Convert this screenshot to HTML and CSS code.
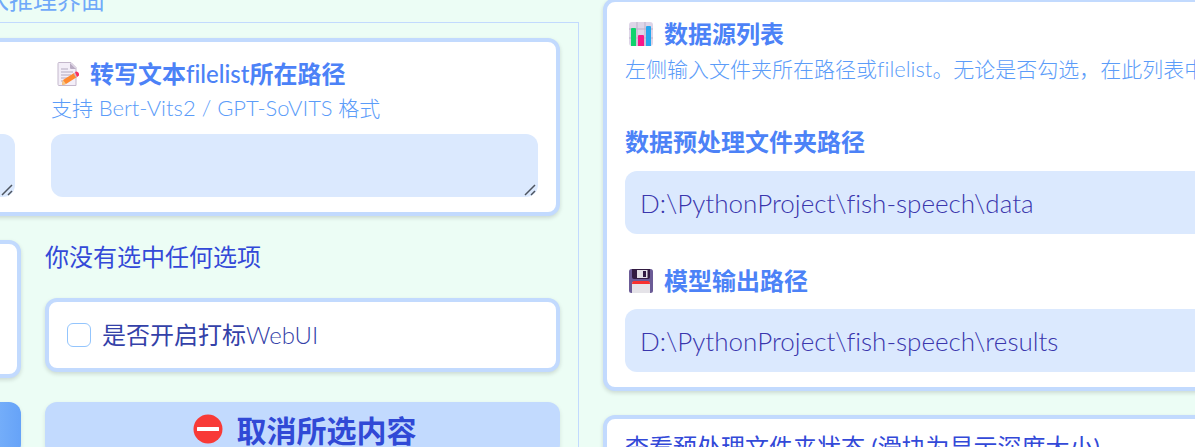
FILE: index.html
```html
<!DOCTYPE html>
<html lang="zh-CN">
<head>
<meta charset="utf-8">
<title>Fish Speech</title>
<link rel="stylesheet" href="styles.css">
</head>
<body>
<main class="page">
  <section class="left">
    <nav class="tabs"><button class="tab" type="button">入推理界面</button></nav>
    <div class="panel">
      <div class="card sources">
        <div class="field previous">
          <div class="area">
            <textarea class="box" aria-label="路径"></textarea>
            <svg class="grip" viewBox="0 0 12 12" aria-hidden="true"><path d="M1 11L11 1M7 11l4-4"/></svg>
          </div>
        </div>
        <div class="field grow">
          <label class="title" for="filelist">
            <svg class="emoji" viewBox="-2 0 24 24" aria-hidden="true">
              <path d="M2 .5h12l5 5v18H2a1 1 0 0 1-1-1v-21a1 1 0 0 1 1-1z" fill="#f3eef8" stroke="#c4b8cc"/>
              <path d="M13 1l6 6h-5a1 1 0 0 1-1-1z" fill="#b9abc3"/>
              <path d="M4 7h7M4 10h12M4 13h10M4 16h7M4 19h3" stroke="#b4a9bf" stroke-width="1.2"/>
              <path d="M5 23l1-5L17 11l3 4-11 7z" fill="#ff8a30"/>
              <path d="M5 23l1-5 3 4z" fill="#f5c889"/>
              <path d="M16.500 11.500l2-1.500 2.500 4-2 1.500z" fill="#d0b9c4"/>
              <path d="M18 10c2-2 5 1.500 4 3.500l-2 1.500z" fill="#f8315f"/>
            </svg>
            <span>转写文本<span class="latin">filelist</span>所在路径</span>
          </label>
          <p class="info">支持 <span class="info-latin">Bert-Vits2 / GPT-SoVITS</span> 格式</p>
          <div class="area">
            <textarea class="box" id="filelist"></textarea>
            <svg class="grip" viewBox="0 0 12 12" aria-hidden="true"><path d="M1 11L11 1M7 11l4-4"/></svg>
          </div>
        </div>
      </div>
      <div class="options">
        <div class="card stub"></div>
        <div class="choice">
          <p class="status">你没有选中任何选项</p>
          <div class="card check-card">
            <label class="check-label"><input class="check" type="checkbox"><span>是否开启打标<span class="light">WebUI</span></span></label>
          </div>
        </div>
        <button class="action primary" type="button" aria-label="确认"></button>
        <button class="action secondary" type="button">
          <svg class="stop" viewBox="0 0 30 30" aria-hidden="true"><circle cx="15" cy="15" r="14.500" fill="#f83a37"/><rect x="4" y="13" width="22" height="4" rx=".5" fill="#fff"/></svg>
          取消所选内容
        </button>
      </div>
    </div>
  </section>
  <section class="right">
    <div class="card data-card">
      <h2 class="title">
        <svg class="emoji" viewBox="0 0 24 24" aria-hidden="true">
          <rect width="24" height="24" rx="3" fill="#ded5e8"/>
          <path d="M8 0v24M16 0v24M0 7h24M0 16h24" stroke="#bdb1c9"/>
          <path d="M2 7q0-1 1-1h3q1 0 1 1v17H2z" fill="#10d36d"/>
          <path d="M9 14q0-1 1-1h4q1 0 1 1v10H9z" fill="#f8178a"/>
          <path d="M17 5q0-1 1-1h3q1 0 1 1v19h-5z" fill="#26a6ee"/>
        </svg>
        <span>数据源列表</span>
      </h2>
      <p class="info">左侧输入文件夹所在路径或<span class="info-latin">filelist</span>。无论是否勾选，在此列表中</p>
      <div class="field path">
        <label class="title" for="data">数据预处理文件夹路径</label>
        <input class="box" id="data" type="text" value="D:\PythonProject\fish-speech\data">
      </div>
      <div class="field path output">
        <label class="title" for="out">
          <svg class="emoji" viewBox="0 0 24 24" aria-hidden="true">
            <rect width="24" height="24" rx="2.500" fill="#6b5b96"/>
            <path d="M3 0h18v8q0 2-2 2H5q-2 0-2-2z" fill="#321b41"/>
            <path d="M8 1h10.500v8H8z" fill="#e4e0e6"/>
            <rect x="14" y="2" width="3" height="6" fill="#321b41"/>
            <path d="M3 24V14q0-1 1-1h16q1 0 1 1v10z" fill="#e5e3e8"/>
            <path d="M3 15q0-3 2-3h14q2 0 2 3z" fill="#f8312f"/>
          </svg>
          <span>模型输出路径</span>
        </label>
        <input class="box" id="out" type="text" value="D:\PythonProject\fish-speech\results">
      </div>
    </div>
    <div class="card depth-card"><p class="status">查看预处理文件夹状态 (滑块为显示深度大小)</p></div>
  </section>
</main>
</body>
</html>
```
FILE: styles.css
```css
* { box-sizing: border-box; }
html, body { height: 100%; }
body {
  margin: 0;
  overflow: hidden;
  background: #ecfdf5;
  color: #3349d8;
  font-family: Lato, "Noto Sans CJK SC", sans-serif;
  font-size: 24px;
  font-weight: 400;
  font-variant-ligatures: none;
}
p, h2 { margin: 0; }
button, input, textarea { font: inherit; font-variant-ligatures: none; }
.page {
  display: grid;
  grid-template-columns: minmax(0, 1fr) minmax(0, 1fr);
  gap: 24px;
  width: calc(100% - 13px);
  height: 100%;
}
.left { display: flex; flex-direction: column; min-height: 100%; }
.tabs { margin-top: -18px; padding-bottom: 4px; }
.tab {
  display: block;
  margin-left: -15px;
  padding: 0;
  border: 0;
  background: none;
  color: #70a9f9;
  line-height: 36px;
}
.panel {
  flex: 1;
  padding: 15px 18px 0 0;
  border-top: 1px solid #c2dafe;
  border-right: 1px solid #c2dafe;
}
.card {
  border: 4px solid #c2dafe;
  border-radius: 12px;
  background: #fff;
  box-shadow: 0 2px 4px rgba(0, 0, 0, .14);
}
.sources {
  display: flex;
  align-items: flex-end;
  gap: 36px;
  margin-left: -49px;
  padding: 14px 18px 15px 0;
}
.field { display: flex; flex-direction: column; }
.previous { flex: none; width: 60px; }
.grow { flex: 1; min-width: 0; }
.title {
  display: flex;
  align-items: center;
  gap: 11px;
  color: #4c82f7;
  font-size: 24px;
  font-weight: 700;
  line-height: 36px;
}
.latin { font-weight: 500; }
.emoji { width: 24px; height: 24px; margin-left: 4px; }
.info { color: #5b9cf9; font-size: 21px; font-weight: 300; line-height: 32px; white-space: nowrap; }
.info-latin { font-size: 22px; line-height: 1; }
.area { position: relative; }
.grip {
  position: absolute;
  right: 2px;
  bottom: 1px;
  width: 12px;
  height: 12px;
  fill: none;
  stroke: #4d5560;
  stroke-width: 1.5;
  pointer-events: none;
}
.box {
  display: block;
  width: 100%;
  height: 63px;
  padding: 0 15px;
  border: 0;
  border-radius: 12px;
  background: #dbe9fe;
  color: #3a36ad;
  font-size: 26px;
  font-weight: 300;
  resize: none;
}
.grow .area { margin-top: 10px; }
.options {
  display: grid;
  grid-template-columns: 70px minmax(0, 1fr);
  gap: 24px;
  margin: 24px 0 0 -49px;
}
.stub { height: 138px; }
.status { line-height: 34px; white-space: nowrap; }
.check-card { margin-top: 24px; padding: 15px 18px; }
.check-label {
  display: flex;
  align-items: center;
  gap: 11px;
  color: #3441a8;
  line-height: 36px;
}
.light { font-weight: 300; }
.check {
  appearance: none;
  width: 24px;
  height: 24px;
  margin: 0;
  border: 1px solid #93c5fd;
  border-radius: 6px;
  background: #fff;
}
.action {
  display: flex;
  align-items: center;
  justify-content: center;
  gap: 14px;
  height: 54px;
  padding: 0;
  border: 0;
  border-radius: 12px;
  font-size: 30px;
  font-weight: 700;
  box-shadow: 0 2px 4px rgba(0, 0, 0, .1);
}
.primary { background: linear-gradient(90deg, #93c5fd, #66a3f8); }
.secondary { background: #c2dafe; color: #3049d6; }
.stop { width: 30px; height: 30px; margin-left: 4px; }
.right { margin: -2px -53px 0 0; }
.data-card { padding: 14px 18px 15px; }
.data-card .info { line-height: 34px; }
.path { margin-top: 38px; }
.path .box { margin-top: 11px; }
.output { margin-top: 29px; }
.output .box { margin-top: 10px; }
.depth-card { margin-top: 24px; padding: 11px 18px; }
```
